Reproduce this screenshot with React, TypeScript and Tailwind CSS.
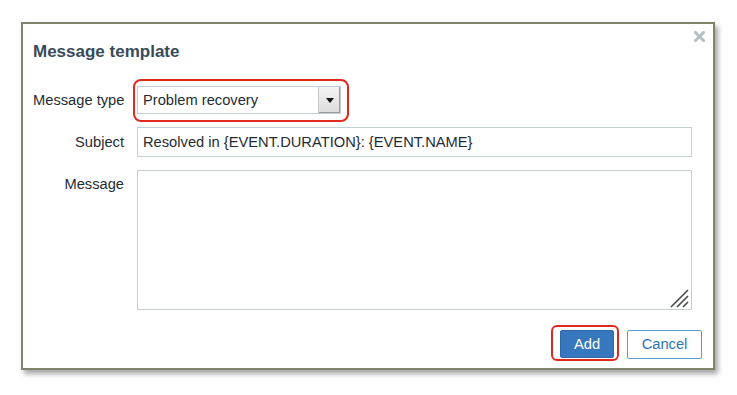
import React from "react";

const font = { fontFamily: '"Liberation Sans", Arial, sans-serif' };

function CloseIcon() {
  return (
    <svg width="11" height="11" viewBox="0 0 11 11">
      <path d="M1.5 1.5 L9.5 9.5 M9.5 1.5 L1.5 9.5" stroke="#b4bec5" strokeWidth="3" strokeLinecap="square" />
    </svg>
  );
}

function ResizeHandle() {
  return (
    <svg width="20" height="20" viewBox="0 0 20 20">
      <path d="M2 19 L19 2 M8 19 L19 8 M14 19 L19 14" stroke="#4a4a4a" strokeWidth="1.6" />
    </svg>
  );
}

export default function App() {
  return (
    <div className="min-h-[395px] w-[737px] bg-white pt-[22px] pl-[21px]" style={font}>
      <div className="relative flex h-[348px] w-[694px] flex-col border-2 border-[#80846a] bg-white shadow-[3px_4px_5px_rgba(0,0,0,0.35)]">
        <button className="absolute right-[8px] top-[7px]">
          <CloseIcon />
        </button>

        <div className="pl-[10px] pt-[18px] text-[17px] font-bold leading-[20px] text-[#384b58]">
          Message template
        </div>

        <div className="mt-[24px] flex flex-col gap-[13px] pl-[10px] pr-[21px] text-[14.7px] text-[#1f2c33]">
          <div className="flex items-center">
            <label className="w-[91px] shrink-0 whitespace-nowrap text-right">Message type</label>
            <div className="relative ml-[13px]">
              <div className="flex h-[28px] w-[204px] items-center border border-[#c5ced3] bg-white pl-[5px]">
                <span className="flex-1">Problem recovery</span>
                <span className="flex h-[26px] w-[22px] items-center justify-center border-l border-[#c8c8c8] bg-gradient-to-b from-[#f4f4f4] to-[#dcdcdc] shadow-[inset_-1px_-1px_0_#9a9a9a]">
                  <svg width="8" height="5" viewBox="0 0 8 5">
                    <path d="M0 0 H8 L4 5 Z" fill="#111" />
                  </svg>
                </span>
              </div>
              <div className="pointer-events-none absolute -bottom-[8px] -left-[4px] -right-[8px] -top-[7px] rounded-[8px] border-2 border-[#e1281e]" />
            </div>
          </div>

          <div className="flex items-center">
            <label className="w-[91px] shrink-0 text-right">Subject</label>
            <div className="ml-[13px] flex h-[30px] flex-1 items-center border border-[#c5ced3] pl-[5px]">
              Resolved in {"{EVENT.DURATION}"}: {"{EVENT.NAME}"}
            </div>
          </div>

          <div className="flex items-start">
            <label className="w-[91px] shrink-0 pt-[3px] text-right">Message</label>
            <div className="relative ml-[13px] h-[140px] flex-1 border border-[#c5ced3]">
              <div className="absolute bottom-[1px] right-[2px]">
                <ResizeHandle />
              </div>
            </div>
          </div>
        </div>

        <div className="mt-[20px] flex justify-end gap-[13px] pr-[11px] text-[14.7px]">
          <div className="relative">
            <button className="h-[28px] w-[54px] rounded-[2px] border border-[#2d68aa] bg-[#3777bd] text-white">
              Add
            </button>
            <div className="pointer-events-none absolute -bottom-[2px] -left-[9px] -right-[5px] -top-[5px] rounded-[6px] border-2 border-[#e1281e]" />
          </div>
          <button className="h-[29px] w-[75px] rounded-[2px] border border-[#5d9bd0] bg-white text-[#2c73b4]">
            Cancel
          </button>
        </div>
      </div>
    </div>
  );
}
